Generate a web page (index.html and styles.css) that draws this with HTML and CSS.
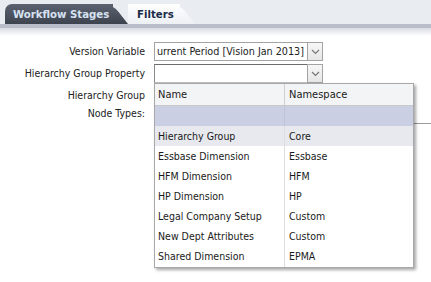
FILE: index.html
```html
<!DOCTYPE html>
<html>
<head>
<meta charset="utf-8">
<link rel="stylesheet" href="styles.css">
</head>
<body>
<div class="tabbar">
  <div class="tab tab-dark">Workflow Stages</div>
  <div class="tab tab-light">Filters</div>
</div>
<div class="tabline"></div>
<div class="form">
  <div class="label">Version Variable</div>
  <div class="combo">
    <div class="field">urrent Period [Vision Jan 2013]</div>
    <div class="btn"><svg width="9" height="6" viewBox="0 0 9 6"><polyline points="1,1 4.5,4.5 8,1" fill="none" stroke="#777" stroke-width="1.2"/></svg></div>
  </div>
  <div class="label">Hierarchy Group Property</div>
  <div class="combo combo-active">
    <div class="field"></div>
    <div class="btn"><svg width="9" height="6" viewBox="0 0 9 6"><polyline points="1,1 4.5,4.5 8,1" fill="none" stroke="#777" stroke-width="1.2"/></svg></div>
  </div>
  <div class="label label-hg">Hierarchy Group</div>
  <div class="blank"></div>
  <div class="label label-nt">Node Types:</div>
  <div class="listbox"></div>

  <div class="popup">
    <div class="prow phead"><div class="c1">Name</div><div class="c2">Namespace</div></div>
    <div class="prow psel"><div class="c1"></div><div class="c2"></div></div>
    <div class="prow phover"><div class="c1">Hierarchy Group</div><div class="c2">Core</div></div>
    <div class="prow"><div class="c1">Essbase Dimension</div><div class="c2">Essbase</div></div>
    <div class="prow"><div class="c1">HFM Dimension</div><div class="c2">HFM</div></div>
    <div class="prow"><div class="c1">HP Dimension</div><div class="c2">HP</div></div>
    <div class="prow"><div class="c1">Legal Company Setup</div><div class="c2">Custom</div></div>
    <div class="prow"><div class="c1">New Dept Attributes</div><div class="c2">Custom</div></div>
    <div class="prow plast"><div class="c1">Shared Dimension</div><div class="c2">EPMA</div></div>
  </div>
</div>
</body>
</html>
```
FILE: styles.css
```css
html, body {
  margin: 0;
  padding: 0;
  background: #fff;
  width: 431px;
  height: 282px;
  overflow: hidden;
}
body {
  font-family: "DejaVu Sans Condensed", "DejaVu Sans", sans-serif;
  font-stretch: condensed;
  font-size: 10.5px;
  color: #222;
}
.tabbar {
  height: 24px;
  background: #e9edf1;
  display: flex;
  align-items: flex-end;
  padding-left: 5px;
  box-sizing: border-box;
}
.tab {
  position: relative;
  height: 20px;
  line-height: 21px;
  font-weight: bold;
  font-size: 11.3px;
  white-space: nowrap;
  box-sizing: border-box;
}
.tab-dark {
  background: linear-gradient(#5b6270, #3d434e);
  color: #d6e2f2;
  padding: 0 4px 0 8px;
  width: 108px;
  border-top-left-radius: 7px;
  z-index: 2;
}
.tab-dark::after {
  content: "";
  position: absolute;
  top: 0;
  right: -15px;
  width: 22px;
  height: 20px;
  background: linear-gradient(#5b6270, #3d434e);
  transform: skewX(38deg);
  transform-origin: bottom left;
  border-top-right-radius: 8px;
  z-index: -1;
}
.tab-light {
  background: linear-gradient(#ffffff, #edf0f4);
  color: #1b2a48;
  margin-left: 15px;
  padding: 0 4px 0 9px;
  width: 52px;
  z-index: 1;
}
.tab-light::after {
  content: "";
  position: absolute;
  top: 0;
  right: -15px;
  width: 22px;
  height: 20px;
  background: linear-gradient(#ffffff, #edf0f4);
  transform: skewX(38deg);
  transform-origin: bottom left;
  border-top-right-radius: 8px;
  z-index: -1;
}
.tabline {
  height: 4px;
  background: #b9bdca;
  border-bottom: 8px solid transparent;
  position: relative;
}
.tabline::after {
  content: "";
  position: absolute;
  left: 0;
  right: 0;
  top: 4px;
  height: 8px;
  background: linear-gradient(#d9dce3, #ffffff);
}
.form {
  position: relative;
  display: grid;
  grid-template-columns: 145px 1fr;
  column-gap: 9px;
  margin-top: 6px;
}
.label {
  text-align: right;
  line-height: 19px;
  height: 19px;
  white-space: nowrap;
}
.combo {
  display: flex;
  width: 169px;
  height: 19px;
  box-sizing: border-box;
  margin-bottom: 3px;
}
.field {
  flex: 1;
  border: 1px solid #a3a3a3;
  border-right: none;
  background: #fff;
  line-height: 17px;
  padding-left: 2px;
  white-space: nowrap;
  overflow: hidden;
  font-size: 10.7px;
}
.combo-active .field {
  border-color: #6d6d6d #b0b0b0 #c0c0c0 #8a8a8a;
}
.btn {
  width: 16px;
  box-sizing: border-box;
  border: 1px solid #a3a3a3;
  background: linear-gradient(#f7f7f7, #e6e6e6);
  display: flex;
  align-items: center;
  justify-content: center;
}
.blank {
  height: 19px;
}
.label-nt {
  margin-top: -1px;
}
.listbox {
  margin-top: 18px;
  height: 140px;
  border-left: 1px solid #8a8a8a;
  border-top: 1px solid #9a9a9a;
  margin-right: -20px;
}
.popup {
  position: absolute;
  left: 154px;
  top: 41px;
  width: 260px;
  background: #fff;
  border: 1px solid #a8a8a8;
  box-sizing: border-box;
  box-shadow: 2px 2px 3px rgba(0, 0, 0, 0.35);
  font-size: 10.5px;
  color: #1a1a1a;
}
.prow {
  display: flex;
  height: 20px;
  line-height: 20px;
}
.c1 {
  width: 130px;
  padding-left: 3px;
  box-sizing: border-box;
  border-right: 1px solid #dedede;
  white-space: nowrap;
}
.c2 {
  flex: 1;
  padding-left: 4px;
}
.phead {
  height: 21px;
  line-height: 21px;
  background: #f3f4f5;
  border-bottom: 1px solid #c9c9c9;
  font-size: 11px;
}
.phead .c1 {
  border-right-color: #d0d0d0;
}
.psel {
  background: #cbcfe3;
}
.psel .c1 {
  border-right-color: #c0c4d8;
}
.phover {
  background: #e7e9ee;
}
.plast {
  height: 21px;
}
```
